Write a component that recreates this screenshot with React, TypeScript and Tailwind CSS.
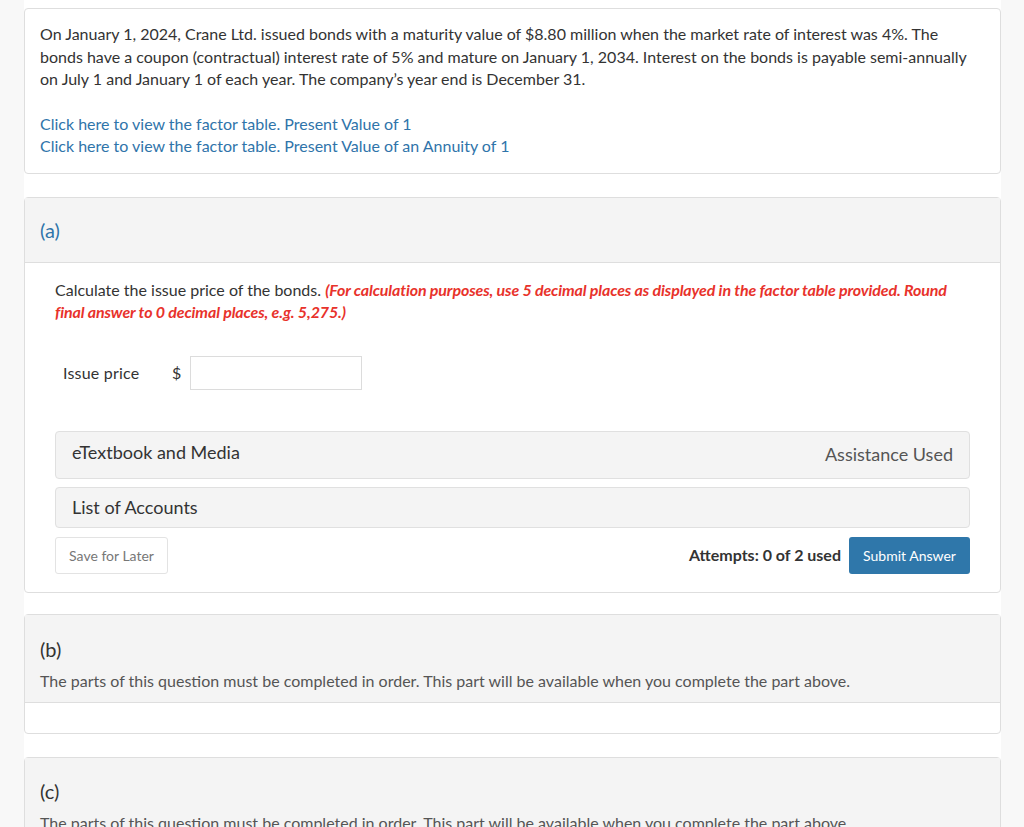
import React from "react";

export default function App() {
  return (
    <div
      className="min-h-screen bg-[#f8f8f8] text-[#333]"
      style={{ fontFamily: "Lato, 'Noto Sans', sans-serif" }}
    >
      <div className="ml-[24px] w-[977px] bg-white pt-[8px] pb-[40px]">
        {/* Intro card */}
        <div className="rounded-[4px] border border-[#dedede] px-[15px] pt-[14px] pb-[16px] text-[16px] leading-[22.5px]">
          <p>
            On January 1, 2024, Crane Ltd. issued bonds with a maturity value of $8.80 million when the market rate of
            interest was 4%. The bonds have a coupon (contractual) interest rate of 5% and mature on January 1, 2034.
            Interest on the bonds is payable semi-annually on July 1 and January 1 of each year. The company’s year
            end is December 31.
          </p>
          <div className="mt-[22px] leading-[22px] text-[#2f74aa]">
            <div>Click here to view the factor table. Present Value of 1</div>
            <div>Click here to view the factor table. Present Value of an Annuity of 1</div>
          </div>
        </div>

        {/* Part (a) */}
        <div className="mt-[23px] rounded-[4px] border border-[#dedede]">
          <div className="border-b border-[#dedede] bg-[#f4f4f4] px-[15px] py-[21px] text-[20px] leading-[22px] text-[#2f74aa]">
            (a)
          </div>
          <div className="px-[30px] pt-[16px] pb-[18px]">
            <p className="text-[16px] leading-[22px]">
              Calculate the issue price of the bonds.{" "}
              <span className="font-bold italic text-[#e8322b] tracking-[-0.13px]">
                (For calculation purposes, use 5 decimal places as displayed in the factor table provided. Round
                final answer to 0 decimal places, e.g. 5,275.)
              </span>
            </p>
            <div className="mt-[33px] flex items-center pl-[8px] text-[16px]">
              <span className="w-[109px] tracking-[0.2px]">Issue price</span>
              <span className="w-[18px]">$</span>
              <div className="h-[34px] w-[172px] border border-[#dcdcdc] bg-white" />
            </div>
            <div className="mt-[41px] flex h-[48px] items-center justify-between rounded-[4px] border border-[#e0e0e0] bg-[#f4f4f4] pl-[16px] pr-[16px] text-[18px]">
              <span className="-mt-[4px]">eTextbook and Media</span>
              <span className="text-[#555]">Assistance Used</span>
            </div>
            <div className="mt-[8px] flex h-[41px] items-center rounded-[4px] border border-[#e0e0e0] bg-[#f4f4f4] pl-[16px] text-[18px]">
              List of Accounts
            </div>
            <div className="mt-[9px] flex items-center justify-between">
              <button className="h-[37px] w-[113px] rounded-[3px] border border-[#e3e3e3] bg-white text-[14px] text-[#777]">
                Save for Later
              </button>
              <div className="flex items-center gap-[8px]">
                <span className="text-[16px] font-bold text-[#333]">Attempts: 0 of 2 used</span>
                <button className="h-[37px] w-[121px] rounded-[3px] bg-[#2f77aa] text-[14px] text-white">
                  Submit Answer
                </button>
              </div>
            </div>
          </div>
        </div>

        {/* Part (b) */}
        <div className="mt-[21px] rounded-[4px] border border-[#dedede]">
          <div className="border-b border-[#dedede] bg-[#f4f4f4] px-[15px] pt-[21px] pb-[10px]">
            <div className="text-[20px] leading-[26px]">(b)</div>
            <div className="mt-[8px] text-[16px] leading-[22px] text-[#555]">
              The parts of this question must be completed in order. This part will be available when you complete the
              part above.
            </div>
          </div>
          <div className="h-[30px]" />
        </div>

        {/* Part (c) */}
        <div className="mt-[23px] rounded-[4px] border border-[#dedede]">
          <div className="border-b border-[#dedede] bg-[#f4f4f4] px-[15px] pt-[20px] pb-[10px]">
            <div className="text-[20px] leading-[26px]">(c)</div>
            <div className="mt-[8px] text-[16px] leading-[22px] text-[#555]">
              The parts of this question must be completed in order. This part will be available when you complete the
              part above.
            </div>
          </div>
          <div className="h-[30px]" />
        </div>
      </div>
    </div>
  );
}
